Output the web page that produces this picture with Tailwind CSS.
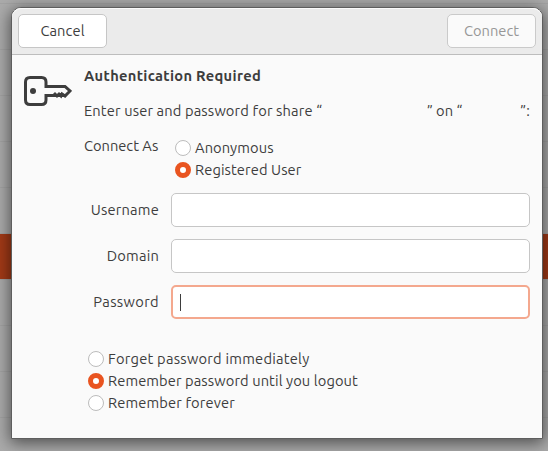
<!DOCTYPE html>
<html lang="en">
<head>
<meta charset="utf-8">
<title>Authentication Required</title>
<script src="https://cdn.jsdelivr.net/npm/@tailwindcss/browser@4"></script>
</head>
<body class="w-[548px] h-[451px] overflow-hidden bg-[#ababab] font-['Ubuntu','Noto_Sans',sans-serif] text-[14.667px] leading-[22px] tracking-[0.1px] text-[#3d3d3d]">
<div class="relative w-full h-full px-[11px] pt-[7px] bg-[repeating-linear-gradient(to_bottom,transparent_0px,transparent_3px,#a3a3a3_3px,#a3a3a3_4px,transparent_4px,transparent_46px)]">
  <div class="absolute left-0 top-[234px] w-full h-[45px] bg-[#a33a17]"></div>
  <main class="relative w-[532px] h-[432px] -mr-4 rounded-t-[10px] border border-[#5e5e5e] bg-[#fafafa] shadow-[0_3px_16px_1px_rgba(0,0,0,0.55)]">
    <header class="h-[47px] flex justify-between items-start pt-[6px] pl-[6px] pr-[6px] rounded-t-[9px] bg-[#ebebeb] border-b border-[#bdbdbd] shadow-[inset_0_1px_0_#fbfbfb]">
      <button class="w-[89px] h-[34px] rounded-[5px] border border-[#c6c6c6] bg-white"><span>Cancel</span></button>
      <button class="w-[89px] h-[34px] rounded-[5px] border border-[#cacaca] bg-[#fafafa] text-[#979797]"><span class="tracking-[0px]">Connect</span></button>
    </header>
    <div class="flex pl-[12px] pt-[10px]">
      <svg class="mt-[11px] w-[48px] h-[30px] shrink-0" viewBox="0 0 48 30" fill="none" stroke="#3d3d3d" stroke-width="3">
        <path d="M22 10V6Q22 1.500 17.500 1.500H6Q1.500 1.500 1.500 6V24Q1.500 28.500 6 28.500H17.500Q22 28.500 22 24V19.500H29.500L31 18L33 20L35 18L37 20L38 18L41 20L46 15L41 10.500H20.500" />
        <circle cx="9" cy="15" r="3" fill="#3d3d3d" stroke="none"/>
      </svg>
      <section class="ml-[12px] w-[446px] whitespace-nowrap">
        <h1 class="font-bold tracking-[0.32px]">Authentication Required</h1>
        <p class="mt-[13px] flex whitespace-pre"><span class="w-[343px] tracking-[0.14px]">Enter user and password for share “</span><span class="w-[93.500px] tracking-[0px]">” on “</span><span>”:</span></p>
        <div class="mt-[13px] flex">
          <div class="w-[75px] mr-[16px]"><span class="tracking-[0px]">Connect As</span></div>
          <div class="pt-[2px]">
            <div class="flex items-center gap-[4px]"><i class="w-4 h-4 rounded-full border border-[#bcbcbc] bg-white"></i><span>Anonymous</span></div>
            <div class="flex items-center gap-[4px]"><i class="w-4 h-4 rounded-full border-[5.500px] border-[#e95420] bg-white"></i><span>Registered User</span></div>
          </div>
        </div>
        <div class="mt-[12px] flex flex-col gap-[12px]">
          <div class="h-[34px] flex items-center justify-end"><label class="mr-[12px] tracking-[0.2px]">Username</label><div class="w-[359px] h-[34px] rounded-[5px] border border-[#c6c6c6] bg-white"></div></div>
          <div class="h-[34px] flex items-center justify-end"><label class="mr-[12px] tracking-[0.2px]">Domain</label><div class="w-[359px] h-[34px] rounded-[5px] border border-[#c6c6c6] bg-white"></div></div>
          <div class="h-[34px] flex items-center justify-end"><label class="mr-[12px] tracking-[0.35px]">Password</label><div class="w-[359px] h-[34px] rounded-[5px] border-2 border-[#f4a88e] bg-white flex items-center pl-[7px]"><i class="w-px h-[17px] bg-[#3d3d3d]"></i></div></div>
        </div>
        <div class="mt-[29px] pl-[4px]">
          <div class="flex items-center gap-[4px]"><i class="w-4 h-4 rounded-full border border-[#bcbcbc] bg-white"></i><span class="tracking-[0.24px]">Forget password immediately</span></div>
          <div class="flex items-center gap-[4px]"><i class="w-4 h-4 rounded-full border-[5.500px] border-[#e95420] bg-white"></i><span>Remember password until you logout</span></div>
          <div class="flex items-center gap-[4px]"><i class="w-4 h-4 rounded-full border border-[#bcbcbc] bg-white"></i><span class="tracking-[0.14px]">Remember forever</span></div>
        </div>
      </section>
    </div>
  </main>
</div>
</body>
</html>
